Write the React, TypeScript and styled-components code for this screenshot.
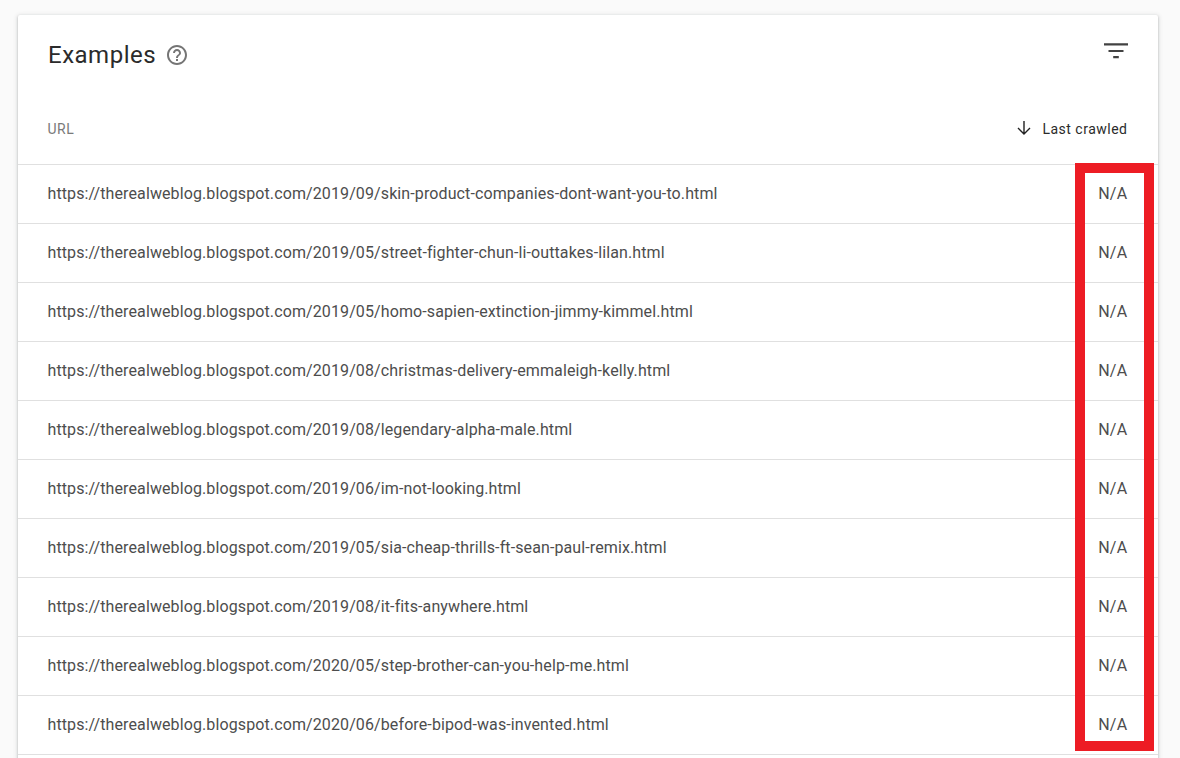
import React from "react";
import styled, { createGlobalStyle } from "styled-components";

const Global = createGlobalStyle`
  html, body { margin: 0; padding: 0; height: 758px; overflow: hidden; background: #fafafa; }
  body { font-family: Roboto, "Liberation Sans", sans-serif; }
  #root { height: 758px; overflow: hidden; }
`;

const Page = styled.div`
  padding: 15px 22px 0 18px;
`;

const Card = styled.section`
  position: relative;
  background: #fff;
  border-radius: 2px;
  box-shadow: 0 1px 2px rgba(60, 64, 67, 0.3), 0 1px 4px 1px rgba(60, 64, 67, 0.15);
`;

const TitleBar = styled.header`
  display: flex;
  align-items: flex-start;
  justify-content: space-between;
  height: 81px;
  padding: 0 30.5px 0 30px;
  box-sizing: border-box;
`;

const TitleGroup = styled.div`
  display: flex;
  align-items: center;
  gap: 9px;
  height: 80px;
`;

const Title = styled.h2`
  margin: 0;
  font-size: 24px;
  font-weight: 400;
  letter-spacing: 0.5px;
  color: #2b2b2b;
  line-height: 80px;
`;

const HelpIcon = styled.svg`
  width: 24px;
  height: 24px;
  display: block;
  margin-top: -1px;
`;

const FilterIcon = styled.svg`
  width: 24px;
  height: 16px;
  display: block;
  margin-top: 28px;
`;

const HeadRow = styled.div`
  display: flex;
  align-items: center;
  justify-content: space-between;
  height: 69px;
  padding: 0 30.5px 2px 29.5px;
  box-sizing: border-box;
  border-bottom: 1px solid #e0e0e0;
`;

const UrlHead = styled.span`
  font-size: 14px;
  letter-spacing: 0.5px;
  color: #7a7a7a;
`;

const SortHead = styled.span`
  display: flex;
  align-items: center;
  gap: 11px;
  font-size: 14px;
  font-weight: 400;
  color: #2b2b2b;
  letter-spacing: 0.5px;
`;

const ArrowIcon = styled.svg`
  width: 14px;
  height: 14px;
  display: block;
  margin-top: -2px;
`;

const Row = styled.div`
  display: flex;
  align-items: center;
  justify-content: space-between;
  height: 59px;
  padding: 0 30.5px 2px 29.5px;
  box-sizing: border-box;
  border-bottom: 1px solid #e0e0e0;
  font-size: 16px;
  color: #4d4d4d;
`;

const Url = styled.span`
  letter-spacing: 0.11px;
`;

const Crawled = styled.span`
  letter-spacing: 0.3px;
`;

const BottomRow = styled.div`
  height: 59px;
`;

const Highlight = styled.div`
  position: absolute;
  left: 1057px;
  top: 148px;
  width: 79px;
  height: 588px;
  box-sizing: border-box;
  border: 10px solid #ed1c24;
  pointer-events: none;
`;

const urls = [
  "2019/09/skin-product-companies-dont-want-you-to.html",
  "2019/05/street-fighter-chun-li-outtakes-lilan.html",
  "2019/05/homo-sapien-extinction-jimmy-kimmel.html",
  "2019/08/christmas-delivery-emmaleigh-kelly.html",
  "2019/08/legendary-alpha-male.html",
  "2019/06/im-not-looking.html",
  "2019/05/sia-cheap-thrills-ft-sean-paul-remix.html",
  "2019/08/it-fits-anywhere.html",
  "2020/05/step-brother-can-you-help-me.html",
  "2020/06/before-bipod-was-invented.html",
];

export default function App() {
  return (
    <Page>
      <Global />
      <Card>
        <TitleBar>
          <TitleGroup>
            <Title>Examples</Title>
            <HelpIcon viewBox="0 0 24 24" fill="#757575">
              <path d="M11 18h2v-2h-2v2zm1-16C6.48 2 2 6.48 2 12s4.48 10 10 10 10-4.48 10-10S17.52 2 12 2zm0 18c-4.41 0-8-3.59-8-8s3.59-8 8-8 8 3.59 8 8-3.59 8-8 8zm0-14c-2.21 0-4 1.79-4 4h2c0-1.1.9-2 2-2s2 .9 2 2c0 2-3 1.75-3 5h2c0-2.25 3-2.5 3-5 0-2.21-1.79-4-4-4z" />
            </HelpIcon>
          </TitleGroup>
          <FilterIcon viewBox="0 0 24 16" fill="#424242">
            <path d="M0 0.3h24v2.1H0zM4.5 6.9h15v2.1h-15zM9.2 13h5.6v2.2H9.2z" />
          </FilterIcon>
        </TitleBar>
        <HeadRow>
          <UrlHead>URL</UrlHead>
          <SortHead>
            <ArrowIcon viewBox="0 0 14 14" fill="none" stroke="#212121" strokeWidth="1.4">
              <path d="M7 0v13M1 7l6 6 6-6" />
            </ArrowIcon>
            Last crawled
          </SortHead>
        </HeadRow>
        {urls.map((path) => (
          <Row key={path}>
            <Url>https://therealweblog.blogspot.com/{path}</Url>
            <Crawled>N/A</Crawled>
          </Row>
        ))}
        <BottomRow />
        <Highlight />
      </Card>
    </Page>
  );
}
